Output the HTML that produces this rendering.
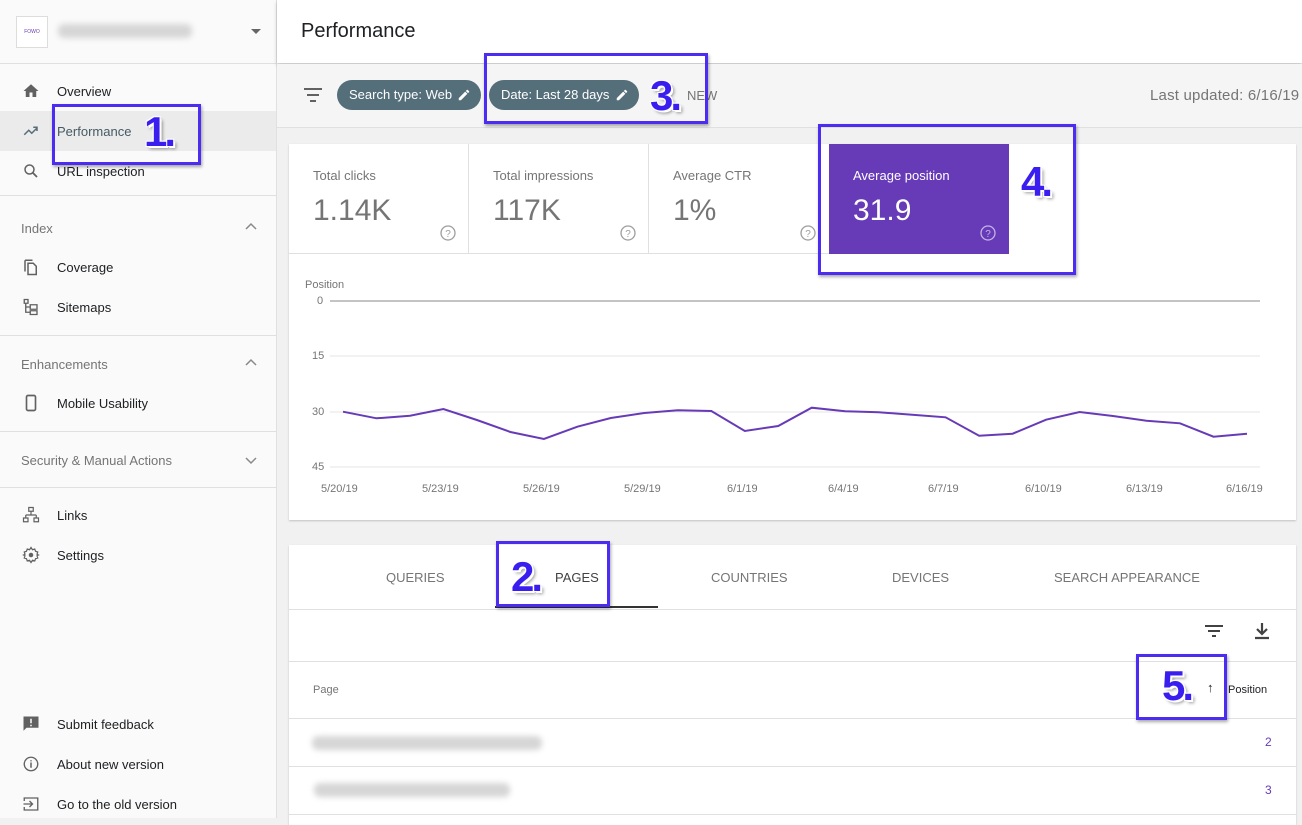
<!DOCTYPE html>
<html><head><meta charset="utf-8"><style>
*{margin:0;padding:0;box-sizing:border-box}
body{width:1302px;height:818px;overflow:hidden;font-family:"Liberation Sans",Arial,sans-serif;background:#f1f1f1;position:relative;color:#202124}
.abs{position:absolute}
#side{left:0;top:0;width:277px;height:818px;background:#fafafa;border-right:1px solid #e0e0e0}
.it{position:absolute;left:0;width:276px;height:40px;font-size:13px;color:#202124;display:flex;align-items:center}
.it svg{position:absolute;left:22px;top:11px}
.it span{position:absolute;left:57px}
.sec{position:absolute;left:21px;font-size:13px;color:#757575}
.hr{position:absolute;left:0;width:276px;height:1px;background:#e0e0e0}
.chev{position:absolute;left:244px}
.chip{position:absolute;top:80px;height:30px;border-radius:15px;background:#546e7a;color:#fff;font-size:13px;line-height:30px;padding-left:12px}
.card{position:absolute;background:#fff;box-shadow:0 1px 2px rgba(0,0,0,.2)}
.ml{font-size:13px;color:#757575}
.mv{font-size:30px;color:#757575}
.box{position:absolute;border:3px solid #4b2cf0;box-shadow:1px 2px 3px rgba(0,0,0,.35)}
.num{position:absolute;font-weight:bold;font-size:42px;color:#3a1ef0;text-shadow:2px 2px 0 #fff,-1px -1px 0 #fff,1px -1px 0 #fff,-1px 1px 0 #fff,3px 3px 3px rgba(0,0,0,.4);letter-spacing:-3px}
.tab{position:absolute;top:570px;font-size:13px;color:#757575}
.ax{position:absolute;font-size:11px;color:#757575}
.blur{position:absolute;height:14px;background:#d6d6d6;border-radius:6px;filter:blur(3px)}
</style></head><body>
<div id="side" class="abs">
 <div class="abs" style="left:16px;top:16px;width:32px;height:32px;border:1px solid #ddd;background:#fff;font-size:5px;color:#6a3ab5;text-align:center;line-height:30px">FOWO</div>
 <div class="blur" style="left:58px;top:24px;width:134px"></div>
 <div class="abs" style="left:251px;top:29px;border-left:5px solid transparent;border-right:5px solid transparent;border-top:5px solid #666"></div>
 <div class="hr" style="top:63px"></div>
 <div class="it" style="top:71px"><svg width="18" height="18" viewBox="0 0 24 24"><path d="M10 20v-6h4v6h5v-8h3L12 3 2 12h3v8z" fill="#616161"/></svg><span>Overview</span></div>
 <div class="it" style="top:111px;background:#ebebeb"><svg width="18" height="18" viewBox="0 0 24 24"><path d="M3 17l6-6 4 4 7-7M15 7h5v5" fill="none" stroke="#546e7a" stroke-width="2"/></svg><span style="color:#455a64">Performance</span></div>
 <div class="it" style="top:151px"><svg width="18" height="18" viewBox="0 0 24 24"><circle cx="10" cy="10" r="6" fill="none" stroke="#616161" stroke-width="2"/><path d="M14.5 14.5L20 20" stroke="#616161" stroke-width="2.4"/></svg><span>URL inspection</span></div>
 <div class="hr" style="top:195px"></div>
 <div class="sec" style="top:221px">Index</div>
 <svg class="chev" style="top:222px" width="14" height="10" viewBox="0 0 14 10"><path d="M2 7l5-5 5 5" fill="none" stroke="#888" stroke-width="1.5"/></svg>
 <div class="it" style="top:247px"><svg width="18" height="18" viewBox="0 0 24 24"><path d="M4 3h10M4 3v15M8 7h7l4 4v11H8z" fill="none" stroke="#616161" stroke-width="2"/></svg><span>Coverage</span></div>
 <div class="it" style="top:287px"><svg width="18" height="18" viewBox="0 0 24 24"><path d="M3 2h5v5H3zM5 7v12h6M5 12h6M11 9h9v6h-9zM11 17h9v5h-9z" fill="none" stroke="#616161" stroke-width="1.8"/></svg><span>Sitemaps</span></div>
 <div class="hr" style="top:335px"></div>
 <div class="sec" style="top:357px">Enhancements</div>
 <svg class="chev" style="top:358px" width="14" height="10" viewBox="0 0 14 10"><path d="M2 7l5-5 5 5" fill="none" stroke="#888" stroke-width="1.5"/></svg>
 <div class="it" style="top:383px"><svg width="18" height="18" viewBox="0 0 24 24"><rect x="6" y="2" width="12" height="20" rx="2" fill="none" stroke="#616161" stroke-width="2.2"/></svg><span>Mobile Usability</span></div>
 <div class="hr" style="top:431px"></div>
 <div class="sec" style="top:453px">Security &amp; Manual Actions</div>
 <svg class="chev" style="top:455px" width="14" height="10" viewBox="0 0 14 10"><path d="M2 3l5 5 5-5" fill="none" stroke="#888" stroke-width="1.5"/></svg>
 <div class="hr" style="top:487px"></div>
 <div class="it" style="top:495px"><svg width="18" height="18" viewBox="0 0 24 24"><path d="M9 2h6v5H9zM12 7v5M5 12h14M5 12v4M19 12v4M2 16h6v5H2zM16 16h6v5h-6z" fill="none" stroke="#616161" stroke-width="1.6"/></svg><span>Links</span></div>
 <div class="it" style="top:535px"><svg width="18" height="18" viewBox="0 0 24 24"><circle cx="12" cy="12" r="3" fill="#616161"/><path d="M12 2l2 3 3-1 1 3 3 1-1 3 2 1-2 1 1 3-3 1-1 3-3-1-2 3-2-3-3 1-1-3-3-1 1-3-2-1 2-1-1-3 3-1 1-3 3 1z" fill="none" stroke="#616161" stroke-width="1.6"/></svg><span>Settings</span></div>
 <div class="it" style="top:704px"><svg width="18" height="18" viewBox="0 0 24 24"><path d="M2 2h20v15H6l-4 4z" fill="#616161"/><path d="M12 5v6M12 13v2" stroke="#fff" stroke-width="2"/></svg><span>Submit feedback</span></div>
 <div class="it" style="top:744px"><svg width="18" height="18" viewBox="0 0 24 24"><circle cx="12" cy="12" r="9" fill="none" stroke="#616161" stroke-width="1.8"/><path d="M12 10v7M12 7v1.5" stroke="#616161" stroke-width="2"/></svg><span>About new version</span></div>
 <div class="it" style="top:784px"><svg width="18" height="18" viewBox="0 0 24 24"><path d="M3 8V4h18v16H3v-4M2 12h11M10 8l4 4-4 4" fill="none" stroke="#616161" stroke-width="1.8"/></svg><span>Go to the old version</span></div>
</div>

<div class="abs" style="left:277px;top:0;width:1025px;height:63px;background:#fff;box-shadow:0 2px 4px rgba(0,0,0,.2)"></div>
<div class="abs" style="left:301px;top:20px;font-size:20px;color:#202124">Performance</div>
<div class="abs" style="left:277px;top:64px;width:1025px;height:64px;background:#f5f5f5;border-bottom:1px solid #e0e0e0"></div>
<svg class="abs" style="left:303px;top:86px" width="20" height="18" viewBox="0 0 20 18"><path d="M1 3h18M4 9h12M7 15h6" stroke="#616161" stroke-width="2"/></svg>
<div class="chip" style="left:337px;width:144px">Search type: Web<svg class="abs" style="right:10px;top:8px" width="14" height="14" viewBox="0 0 24 24"><path d="M3 17.25V21h3.75L17.8 9.94l-3.75-3.75zM20.7 7.04a1 1 0 000-1.41l-2.34-2.34a1 1 0 00-1.41 0l-1.83 1.83 3.75 3.75z" fill="#fff"/></svg></div>
<div class="chip" style="left:489px;width:150px">Date: Last 28 days<svg class="abs" style="right:10px;top:8px" width="14" height="14" viewBox="0 0 24 24"><path d="M3 17.25V21h3.75L17.8 9.94l-3.75-3.75zM20.7 7.04a1 1 0 000-1.41l-2.34-2.34a1 1 0 00-1.41 0l-1.83 1.83 3.75 3.75z" fill="#fff"/></svg></div>
<div class="abs" style="left:687px;top:88px;font-size:13px;color:#757575">NEW</div>
<div class="abs" style="left:1150px;top:87px;font-size:15px;color:#757575;letter-spacing:.2px">Last updated: 6/16/19</div>

<div class="card" style="left:289px;top:144px;width:1007px;height:376px"></div>
<div class="abs" style="left:468px;top:144px;width:1px;height:110px;background:#e0e0e0"></div>
<div class="abs" style="left:648px;top:144px;width:1px;height:110px;background:#e0e0e0"></div>
<div class="abs" style="left:289px;top:253px;width:540px;height:1px;background:#e0e0e0"></div>
<div class="abs ml" style="left:313px;top:168px">Total clicks</div>
<div class="abs mv" style="left:313px;top:194px">1.14K</div>
<div class="abs ml" style="left:493px;top:168px">Total impressions</div>
<div class="abs mv" style="left:493px;top:194px">117K</div>
<div class="abs ml" style="left:673px;top:168px">Average CTR</div>
<div class="abs mv" style="left:673px;top:194px">1%</div>
<svg class="abs" style="left:440px;top:225px" width="16" height="16"><circle cx="8" cy="8" r="7" fill="none" stroke="#9e9e9e" stroke-width="1.3"/><text x="8" y="12" font-size="10" text-anchor="middle" fill="#9e9e9e" font-family="Liberation Sans">?</text></svg>
<svg class="abs" style="left:620px;top:225px" width="16" height="16"><circle cx="8" cy="8" r="7" fill="none" stroke="#9e9e9e" stroke-width="1.3"/><text x="8" y="12" font-size="10" text-anchor="middle" fill="#9e9e9e" font-family="Liberation Sans">?</text></svg>
<svg class="abs" style="left:800px;top:225px" width="16" height="16"><circle cx="8" cy="8" r="7" fill="none" stroke="#9e9e9e" stroke-width="1.3"/><text x="8" y="12" font-size="10" text-anchor="middle" fill="#9e9e9e" font-family="Liberation Sans">?</text></svg>
<div class="abs" style="left:829px;top:144px;width:180px;height:110px;background:#673ab7"></div>
<div class="abs" style="left:853px;top:168px;font-size:13px;color:#fff">Average position</div>
<div class="abs" style="left:853px;top:194px;font-size:30px;color:#fff">31.9</div>
<svg class="abs" style="left:980px;top:225px" width="16" height="16"><circle cx="8" cy="8" r="7" fill="none" stroke="#c5b3e6" stroke-width="1.3"/><text x="8" y="12" font-size="10" text-anchor="middle" fill="#c5b3e6" font-family="Liberation Sans">?</text></svg>

<div class="ax" style="left:305px;top:279px">Position</div>
<div class="ax" style="left:317px;top:295px">0</div>
<div class="ax" style="left:312px;top:350px">15</div>
<div class="ax" style="left:312px;top:406px">30</div>
<div class="ax" style="left:312px;top:461px">45</div>
<svg class="abs" style="left:0;top:0" width="1302" height="818">
<line x1="330" y1="301" x2="1260" y2="301" stroke="#888" stroke-width="1"/>
<line x1="330" y1="356" x2="1260" y2="356" stroke="#e6e6e6"/>
<line x1="330" y1="412" x2="1260" y2="412" stroke="#e6e6e6"/>
<line x1="330" y1="467" x2="1260" y2="467" stroke="#e6e6e6"/>
<polyline fill="none" stroke="#673ab7" stroke-width="2" points="343,411.7 376.5,418.3 410,415.7 443.4,409 476.9,420 510.4,432 543.9,439 577.4,426.7 610.8,418 644.3,413 677.8,410.3 711.3,411 744.8,431 778.2,426 811.7,407.7 845.2,411.3 878.7,412.3 912.2,414.7 945.6,417.3 979.1,435.7 1012.6,433.7 1046.1,419.7 1079.6,412 1113,416 1146.5,420.7 1180,423.3 1213.5,436.7 1247,433.7"/>
</svg>
<div class="ax" style="left:321px;top:483px">5/20/19</div>
<div class="ax" style="left:422px;top:483px">5/23/19</div>
<div class="ax" style="left:523px;top:483px">5/26/19</div>
<div class="ax" style="left:624px;top:483px">5/29/19</div>
<div class="ax" style="left:727px;top:483px">6/1/19</div>
<div class="ax" style="left:828px;top:483px">6/4/19</div>
<div class="ax" style="left:928px;top:483px">6/7/19</div>
<div class="ax" style="left:1025px;top:483px">6/10/19</div>
<div class="ax" style="left:1126px;top:483px">6/13/19</div>
<div class="ax" style="left:1226px;top:483px">6/16/19</div>

<div class="card" style="left:289px;top:545px;width:1007px;height:280px"></div>
<div class="tab" style="left:386px">QUERIES</div>
<div class="tab" style="left:555px;color:#424242">PAGES</div>
<div class="tab" style="left:711px">COUNTRIES</div>
<div class="tab" style="left:892px">DEVICES</div>
<div class="tab" style="left:1054px">SEARCH APPEARANCE</div>
<div class="abs" style="left:495px;top:606px;width:163px;height:2px;background:#333"></div>
<div class="abs" style="left:289px;top:609px;width:1007px;height:1px;background:#e0e0e0"></div>
<svg class="abs" style="left:1204px;top:624px" width="20" height="16"><path d="M1 2h18M4 7h12M8 12h4" stroke="#424242" stroke-width="2"/></svg>
<svg class="abs" style="left:1254px;top:622px" width="16" height="18"><path d="M8 1v10M3 7l5 5 5-5M1 16h14" stroke="#424242" stroke-width="2.2" fill="none"/></svg>
<div class="abs" style="left:289px;top:661px;width:1007px;height:1px;background:#e0e0e0"></div>
<div class="abs" style="left:313px;top:684px;font-size:11px;color:#757575">Page</div>
<div class="abs" style="left:1207px;top:680px;font-size:13px;color:#202124">↑</div>
<div class="abs" style="left:1228px;top:684px;font-size:11px;color:#202124">Position</div>
<div class="abs" style="left:289px;top:718px;width:1007px;height:1px;background:#e0e0e0"></div>
<div class="blur" style="left:312px;top:736px;width:230px"></div>
<div class="abs" style="left:1265px;top:735px;font-size:12px;color:#673ab7">2</div>
<div class="abs" style="left:289px;top:766px;width:1007px;height:1px;background:#e0e0e0"></div>
<div class="blur" style="left:314px;top:783px;width:196px"></div>
<div class="abs" style="left:1265px;top:783px;font-size:12px;color:#673ab7">3</div>
<div class="abs" style="left:289px;top:814px;width:1007px;height:1px;background:#e0e0e0"></div>

<div class="box" style="left:52px;top:104px;width:149px;height:61px"></div>
<div class="num" style="left:144px;top:108px">1.</div>
<div class="box" style="left:484px;top:53px;width:224px;height:71px"></div>
<div class="num" style="left:650px;top:72px">3.</div>
<div class="box" style="left:818px;top:124px;width:258px;height:151px"></div>
<div class="num" style="left:1021px;top:158px">4.</div>
<div class="box" style="left:496px;top:541px;width:114px;height:66px"></div>
<div class="num" style="left:511px;top:553px">2.</div>
<div class="box" style="left:1136px;top:654px;width:91px;height:66px"></div>
<div class="num" style="left:1162px;top:662px">5.</div>
</body></html>
